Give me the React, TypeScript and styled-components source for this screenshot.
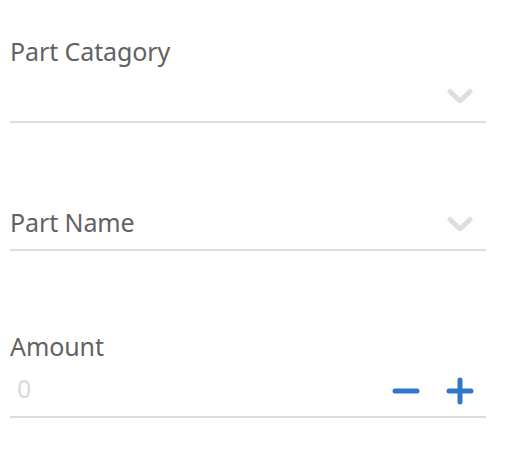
import React from "react";
import styled, { createGlobalStyle } from "styled-components";

const Global = createGlobalStyle`
  body { margin: 0; background: #fff; font-family: "Noto Sans", "Open Sans", sans-serif; }
`;

const Form = styled.div`
  width: 476px;
  padding: 36px 0 0 10px;
  display: flex;
  flex-direction: column;
`;

const Field = styled.div<{ $mb: number }>`
  display: flex;
  flex-direction: column;
  margin-bottom: ${(p) => p.$mb}px;
`;

const Label = styled.div`
  font-size: 25px;
  line-height: 30px;
  color: #626262;
  letter-spacing: -0.1px;
`;

const Row = styled.div<{ $h: number }>`
  height: ${(p) => p.$h}px;
  border-bottom: 2px solid #dcdcdc;
  display: flex;
  align-items: flex-start;
  justify-content: space-between;
  box-sizing: border-box;
`;

const Placeholder = styled.span`
  font-size: 25px;
  line-height: 30px;
  color: #626262;
  letter-spacing: -0.1px;
`;

const Value = styled.span`
  font-size: 25px;
  line-height: 30px;
  color: #dadada;
  padding-left: 7px;
  margin-top: 12px;
`;

const Chevron = styled.svg<{ $mt: number }>`
  width: 26px;
  height: 18px;
  margin-right: 13px;
  margin-top: ${(p) => p.$mt}px;
`;

const Buttons = styled.div`
  display: flex;
  gap: 26px;
  margin-right: 12px;
  margin-top: 16px;
  align-items: center;
`;

const IconBtn = styled.svg`
  width: 28px;
  height: 28px;
`;

const ChevronIcon = ({ mt }: { mt: number }) => (
  <Chevron $mt={mt} viewBox="0 0 26 18">
    <path d="M3 3.5 L13 13 L23 3.5" fill="none" stroke="#dedede" strokeWidth="5" strokeLinecap="round" strokeLinejoin="round" />
  </Chevron>
);

export default function App() {
  return (
    <>
      <Global />
      <Form>
        <Field $mb={84}>
          <Label>Part Catagory</Label>
          <Row $h={57}>
            <span />
            <ChevronIcon mt={22} />
          </Row>
        </Field>
        <Field $mb={80}>
          <Row $h={44}>
            <Placeholder>Part Name</Placeholder>
            <ChevronIcon mt={9} />
          </Row>
        </Field>
        <Field $mb={0}>
          <Label>Amount</Label>
          <Row $h={57}>
            <Value>0</Value>
            <Buttons>
              <IconBtn viewBox="0 0 28 28">
                <path d="M3 14 H25" stroke="#2f78c8" strokeWidth="5" strokeLinecap="round" />
              </IconBtn>
              <IconBtn viewBox="0 0 28 28">
                <path d="M3 14 H25 M14 3 V25" stroke="#2f78c8" strokeWidth="5" strokeLinecap="round" />
              </IconBtn>
            </Buttons>
          </Row>
        </Field>
      </Form>
    </>
  );
}
